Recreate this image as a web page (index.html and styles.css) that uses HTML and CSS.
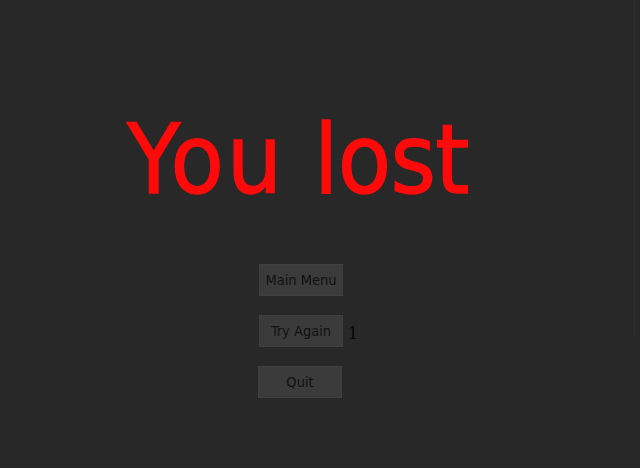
FILE: index.html
```html
<!DOCTYPE html>
<html>
<head>
<meta charset="utf-8">
<link rel="stylesheet" href="styles.css">
</head>
<body>
<div class="screen">
  <main class="content">
    <h1 class="title"><span class="word-a">You</span> <span class="word-b">lost</span></h1>
    <div class="menu">
      <div class="row"><button class="btn">Main Menu</button></div>
      <div class="row"><button class="btn">Try Again</button><span class="count">1</span></div>
      <div class="row"><button class="btn btn-quit">Quit</button></div>
    </div>
  </main>
  <div class="edge"></div>
</div>
</body>
</html>
```
FILE: styles.css
```css
html, body {
  margin: 0;
  padding: 0;
  background: #282828;
  width: 640px;
  height: 468px;
  overflow: hidden;
}
.screen {
  display: flex;
  width: 640px;
  height: 468px;
}
.content {
  flex: 1;
  display: flex;
  flex-direction: column;
}
.title {
  margin: 111px 0 0 0;
  padding-left: 127px;
  font-family: "DejaVu Sans Condensed", "DejaVu Sans", sans-serif;
  font-stretch: condensed;
  font-weight: normal;
  font-size: 97px;
  line-height: 97px;
  height: 97px;
  letter-spacing: 1.2px;
  color: #ff0a0a;
  -webkit-text-stroke: 1.3px #ff0a0a;
  white-space: nowrap;
}
.word-a {
  letter-spacing: 3px;
}
.word-b {
  letter-spacing: -0.6px;
}
.menu {
  margin-top: 56px;
  padding-left: 259px;
  display: flex;
  flex-direction: column;
  gap: 19px;
}
.row {
  display: flex;
  align-items: flex-end;
  height: 32px;
}
.btn {
  width: 84px;
  height: 32px;
  margin: 0;
  padding: 0;
  border: 1px solid #3f3f3f;
  background: #3b3b3b;
  color: #111111;
  font-family: "DejaVu Sans Condensed", "DejaVu Sans", sans-serif;
  font-stretch: condensed;
  font-size: 14.5px;
  line-height: 30px;
  text-align: center;
}
.btn-quit {
  margin-left: -1px;
}
.count {
  margin-left: 5px;
  margin-bottom: 5px;
  font-family: "Liberation Serif", serif;
  font-size: 19px;
  line-height: 18px;
  color: #050505;
}
.edge {
  width: 6px;
  height: 336px;
  border-left: 1px solid #2f2f2f;
  box-sizing: border-box;
}
```
